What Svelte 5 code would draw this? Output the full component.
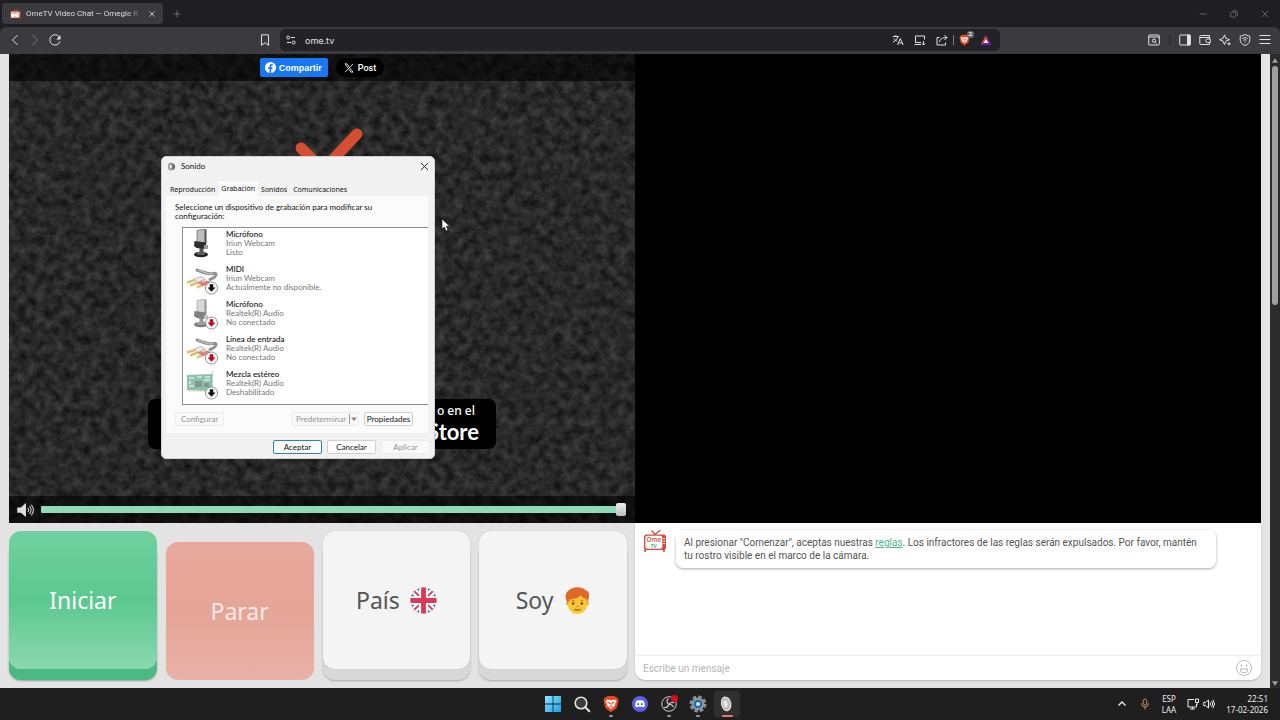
<script lang="ts">
    type Kind = 'mic' | 'cable' | 'board';

    interface Device {
        name: string;
        source: string;
        status: string;
        kind: Kind;
        badge?: 'black' | 'red';
    }

    const devices: Device[] = [
        { name: 'Micrófono', source: 'Iriun Webcam', status: 'Listo', kind: 'mic' },
        { name: 'MIDI', source: 'Iriun Webcam', status: 'Actualmente no disponible.', kind: 'cable', badge: 'black' },
        { name: 'Micrófono', source: 'Realtek(R) Audio', status: 'No conectado', kind: 'mic', badge: 'red' },
        { name: 'Línea de entrada', source: 'Realtek(R) Audio', status: 'No conectado', kind: 'cable', badge: 'red' },
        { name: 'Mezcla estéreo', source: 'Realtek(R) Audio', status: 'Deshabilitado', kind: 'board', badge: 'black' }
    ];

    const tabs = ['Reproducción', 'Grabación', 'Sonidos', 'Comunicaciones'];

    let activeTab = $state('Grabación');
    let volume = $state(100);
    let message = $state('');
</script>

{#snippet tvLogo()}
    <svg viewBox="0 0 24 22" fill="none">
        <path d="M9 1l3 3.500 5-4" stroke="#cf5a48" stroke-width="1.500" stroke-linecap="round" />
        <path d="M3 19l-1 2M20 19l1 2" stroke="#cf5a48" stroke-width="2" stroke-linecap="round" />
        <rect x="1" y="4.500" width="22" height="15.500" rx="2.500" fill="#cf4f3c" />
        <rect x="2.300" y="5.800" width="17" height="13" rx="2" fill="#fff" />
        <path d="M20.400 8.500h1.600M20.400 11h1.600M20.400 13.500h1.600" stroke="#fff" stroke-width="1.200" />
        <text x="10.800" y="12" font-size="6.500" fill="#d4604f" text-anchor="middle" font-weight="600">Ome</text>
        <text x="10.800" y="17.800" font-size="5" fill="#4fae86" text-anchor="middle" font-weight="700">TV</text>
    </svg>
{/snippet}

{#snippet deviceIcon(device: Device)}
    <svg class="device-icon" viewBox="0 2 36 34">
        <g opacity={device.badge ? 0.6 : 1}>
            {#if device.kind === 'mic'}
                <ellipse cx="16" cy="27.500" rx="7" ry="2.800" fill="#222" />
                <ellipse cx="16" cy="26.500" rx="4" ry="1.300" fill="#777" />
                <path d="M14.500 20h4v6.500h-4z" fill="#555" />
                <path d="M12 3.500l7.500-1.500 1.500 1v14l-9 1z" fill="#bdbdbd" stroke="#777" stroke-width=".8" />
                <path d="M19.500 2l1.800.8v13.700h-1.800z" fill="#555" />
                <path d="M9.500 14l11.500 1.500v6.500l-9.500-1-2.500-2z" fill="#2d2d2d" />
                <path d="M19 18h4v4h-4z" fill="#9a9a9a" />
            {:else if device.kind === 'cable'}
                <path d="M12 8c7 2.500 12 5 16 3.500s5.500 2.500-3 6" fill="none" stroke="#4c4c4c" stroke-width="3" stroke-linecap="round" />
                <path d="M13 8c7 2.500 11 5 15 3.500" fill="none" stroke="#aaa" />
                <path d="M2 20.500l8-2.500M5 23.500l8-3" stroke="#c8961a" stroke-width="2.500" />
                <path d="M9 17l7-2.500 4 2.500-7 3.500z" fill="#dedede" stroke="#777" stroke-width=".8" />
                <path d="M12 25.500l7-3" stroke="#d0a01f" stroke-width="2.500" />
                <path d="M12 20.500l9-3 5 3-8 4z" fill="#c2342a" />
                <path d="M17 19.500l6-1.500" stroke="#eee" />
            {:else}
                <path d="M2 8l25-1v16l-5 1-20-1z" fill="#3f9a72" />
                <path d="M27.500 4v19" stroke="#aaa" />
                <path d="M4 11h5M12 10h5M20 10h5M4 19h5M19 13h6M5 14v3" stroke="#c5e4cf" stroke-width="1.500" />
                <rect x="10" y="14" width="7" height="6" fill="#315347" />
                <rect x="19" y="16" width="5" height="4" fill="#315347" />
                <path d="M3 24h19" stroke="#c7a24b" stroke-dasharray="2 1" />
            {/if}
        </g>
        {#if device.badge}
            <circle cx="26.500" cy="26" r="6" fill="#fff" stroke="#777" stroke-width=".8" />
            <path d="M24.700 22.200h3.600v3.300h2.200l-4 4.300-4-4.300h2.200z" fill={device.badge === 'red' ? '#c00820' : '#111'} />
        {/if}
    </svg>
{/snippet}

{#snippet braveIcon()}
    <svg viewBox="0 0 16 18">
        <path d="M4.500 1h7l1.500 1.600 1.700.2.800 2.700-1.800 7.500L8 17.300 2.300 13 .5 5.500l.8-2.700 1.700-.2z" fill="#ee4523" />
        <path d="M4 4.500l4 .7 4-.7 1.500 2-1.700 2.700.4 1.300-1.700 1.300L8 14l-2.500-2.200-1.700-1.300.4-1.300L2.500 6.500z" fill="#fff" />
        <path d="M4.300 7l2.500.8-.8 1.400M11.700 7l-2.500.8.8 1.400M8 8v3M6.500 11.500L8 12l1.500-.5" fill="none" stroke="#ee4523" />
    </svg>
{/snippet}

<div class="screen">
    <header class="tab-strip">
        <div class="browser-tab">
            <span class="favicon">{@render tvLogo()}</span>
            <span class="tab-title">OmeTV Video Chat — Omegle R</span>
            <button class="plain" aria-label="Cerrar pestaña">
                <svg class="i8" viewBox="0 0 8 8"><path d="M1.500 1.500l5 5M6.500 1.500l-5 5" /></svg>
            </button>
        </div>
        <button class="plain dim new-tab" aria-label="Nueva pestaña">
            <svg class="i8" viewBox="0 0 8 8"><path d="M4 .5v7M.5 4h7" /></svg>
        </button>
        <div class="window-controls dim">
            <button class="plain" aria-label="Minimizar"><svg class="i8" viewBox="0 0 8 8"><path d="M.5 4h7" /></svg></button>
            <button class="plain" aria-label="Restaurar">
                <svg class="i8" viewBox="0 0 8 8"><rect x=".7" y="2.200" width="5" height="5" rx="1" /><path d="M2.500.8h3.500a1.500 1.500 0 0 1 1.500 1.500v3.500" /></svg>
            </button>
            <button class="plain" aria-label="Cerrar"><svg class="i8" viewBox="0 0 8 8"><path d="M.8.8l6.400 6.400M7.200.8L.8 7.200" /></svg></button>
        </div>
    </header>

    <nav class="toolbar">
        <div class="nav-buttons">
            <button class="plain" aria-label="Atrás"><svg class="i12" viewBox="0 0 12 12"><path d="M8.500 1L3.500 6l5 5" /></svg></button>
            <button class="plain dim" aria-label="Adelante"><svg class="i12" viewBox="0 0 12 12"><path d="M3.500 1l5 5-5 5" /></svg></button>
            <button class="plain" aria-label="Recargar">
                <svg class="i12" viewBox="0 0 12 12"><path d="M10.500 3.200A5.200 5.200 0 1 0 11 7.500" /><path d="M11.500 1v4.500H7.300z" fill="currentColor" stroke="none" /></svg>
            </button>
        </div>
        <div class="address-group">
            <button class="plain" aria-label="Marcador"><svg class="i12" viewBox="0 0 12 12"><path d="M2.500.8h7v10.500L6 8.700l-3.500 2.600z" /></svg></button>
            <div class="address">
                <svg class="i12" viewBox="0 0 12 12"><circle cx="3.200" cy="3.500" r="1.500" /><path d="M6 3.500h4M2 8.500h4" /><circle cx="8.700" cy="8.500" r="1.500" /></svg>
                <input class="url" aria-label="Dirección" value="ome.tv" />
                <div class="address-icons">
                    <svg class="i12" viewBox="0 0 12 12"><path d="M.8 2.500h6M3.800 1v1.500M6 2.500C5.500 5 3.500 7 1 8M2 4.500c1 1.500 2 2.300 3.200 2.800M5.500 11L8.300 4.500 11.200 11M6.500 9h3.700" /></svg>
                    <svg class="i12" viewBox="0 0 12 12"><path d="M10.500 5.500V2H1.500v6.500h5.500M.5 10.500H7M9.500 7v4M8 9.500l1.500 1.500L11 9.500" /></svg>
                    <svg class="i12" viewBox="0 0 12 12"><path d="M3.500 3.500H1v7.500h8.500V8.500M3.500 8c.3-3 2.500-4.500 7.500-4.500M8.500 1L11 3.500 8.500 6" /></svg>
                    <span class="divider light"></span>
                    <span class="shield">{@render braveIcon()}<b>2</b></span>
                    <svg class="i12 triangle" viewBox="0 0 12 12"><path d="M6 1L.5 11 6 8z" fill="#f0442c" /><path d="M6 1l5.500 10L6 8z" fill="#8b2a8c" /><path d="M.5 11h11L6 7.500z" fill="#5a2bb2" /><path d="M6 5L3.700 9h4.600z" fill="#fff" /></svg>
                </div>
            </div>
        </div>
        <div class="toolbar-icons">
            <svg class="i12" viewBox="0 0 12 12"><rect x=".7" y="1" width="10.600" height="10" rx="1" /><path d="M1 3h10" /><circle cx="6" cy="6.700" r="1.600" /><path d="M7.200 8l1.300 1.300" /></svg>
            <span class="divider"></span>
            <svg class="i12" viewBox="0 0 12 12"><rect x=".7" y="1" width="10.600" height="10" rx="1" /><path d="M8.500 1h2.500v10H8.500z" fill="currentColor" /></svg>
            <svg class="i12" viewBox="0 0 12 12"><path d="M10.500 3.500V1.500h-9A1 1 0 0 0 .8 2.500v7a1 1 0 0 0 1 1h8.700V8.500M1 3.500h9.500v1.500M11.300 5H8.500a1.700 1.700 0 0 0 0 3.500h2.800z" /></svg>
            <svg class="i12" viewBox="0 0 12 12"><path d="M5.500.8l1.400 3.500 3.600 1.400-3.600 1.400-1.400 3.500-1.400-3.500L.5 5.700l3.600-1.400z" /><path d="M10 8.200v3.300M8.300 9.800h3.400" /></svg>
            <svg class="i12" viewBox="0 0 12 12"><path d="M6 .6l4.800 1.700v3.500C10.800 8.500 9 10.500 6 11.500 3 10.500 1.200 8.500 1.200 5.800V2.300z" /><path d="M3.300 4.500c1.500-1 3.900-1 5.400 0M4.300 6.300c1-.7 2.400-.7 3.400 0M5.500 8h1" /></svg>
            <svg class="i12" viewBox="0 0 12 12"><path d="M.5 1.500h11M.5 5.500h11M.5 9.500h11" /></svg>
        </div>
    </nav>

    <main class="viewport">
        <div class="page">
            <section class="video local">
                <svg class="static" aria-hidden="true">
                    <filter id="noise" color-interpolation-filters="sRGB" x="0" y="0" width="100%" height="100%">
                        <feTurbulence type="fractalNoise" baseFrequency="0.11" numOctaves="3" seed="7" />
                        <feColorMatrix values=".25 0 0 0 .035 .25 0 0 0 .035 .25 0 0 0 .035 0 0 0 0 1" />
                    </filter>
                    <rect width="100%" height="100%" filter="url(#noise)" />
                </svg>
                <svg class="antenna" viewBox="0 0 70 50" aria-hidden="true">
                    <path d="M7 24l22 22L63 10" />
                </svg>
                <div class="store-badges" aria-hidden="true">
                    <small>o en el</small>
                    <span>Store</span>
                </div>
                <div class="share-bar">
                    <button class="share facebook">
                        <svg viewBox="0 0 12 12"><circle cx="6" cy="6" r="6" fill="#fff" /><path d="M5 12V7.500H3.500V5.700H5V4.500C5 3 5.900 2.200 7.200 2.200l1.200.1v1.600h-.7c-.7 0-.9.4-.9.900v.9h1.500l-.3 1.800H6.800V12z" fill="#1877f2" /></svg>
                        Compartir
                    </button>
                    <button class="share post">
                        <svg viewBox="0 0 12 12" fill="none" stroke="#fff"><path d="M1.200 1h2.300l7.300 10H8.500zM10.800 1L6.800 5.500M5 7L1.300 11" /></svg>
                        Post
                    </button>
                </div>
                <div class="volume-bar">
                    <svg viewBox="0 0 20 16" aria-hidden="true"><path d="M0 5h4l6-5v16l-6-5H0z" fill="#ddd" /><path d="M12 5.500q2 2.500 0 5M14 3.500q3.500 4.500 0 9M16 2q5 6 0 12" fill="none" stroke="#ccc" stroke-width="1.200" /></svg>
                    <input type="range" min="0" max="100" aria-label="Volumen" bind:value={volume} />
                </div>
            </section>

            <section class="video remote" aria-label="Vídeo remoto"></section>

            <section class="controls">
                <button class="big start">Iniciar</button>
                <button class="big stop">Parar</button>
                <button class="big light">
                    País
                    <svg viewBox="0 0 28 28">
                        <clipPath id="round"><circle cx="14" cy="14" r="13.500" /></clipPath>
                        <g clip-path="url(#round)">
                            <path d="M0 0h28v28H0z" fill="#366ca0" />
                            <path d="M0 0l28 28M28 0L0 28" stroke="#fff" stroke-width="7" />
                            <path d="M0 0l28 28M28 0L0 28" stroke="#dc3858" stroke-width="2" />
                            <path d="M14 0v28M0 14h28" stroke="#fff" stroke-width="9" />
                            <path d="M14 0v28M0 14h28" stroke="#dc3858" stroke-width="5" />
                        </g>
                    </svg>
                </button>
                <button class="big light">
                    Soy
                    <svg viewBox="0 0 28 28">
                        <circle cx="4" cy="17" r="2" fill="#f4ad24" /><circle cx="24" cy="17" r="2" fill="#f4ad24" />
                        <path d="M4 10h20v8c0 5.500-4 10-10 10S4 23.500 4 18z" fill="#fdc835" />
                        <path d="M4 17C0 10 1 5 7 2c5-3 12-2 15 1 5 1 5 7 2 13l-1-4c-3 0-5-2-6-3-3 3-7 3-11 4z" fill="#e0692a" />
                        <circle cx="9.500" cy="17" r="1.300" fill="#653c23" /><circle cx="18.500" cy="17" r="1.300" fill="#653c23" />
                        <path d="M8 14.500q1.500-1 3 0M17 14.500q1.500-1 3 0M13 20h2" stroke="#b86d20" fill="none" />
                        <path d="M10.500 23q3.500 2 7 0" stroke="#9c5320" fill="none" stroke-width="1.200" />
                    </svg>
                </button>
            </section>

            <section class="chat">
                <div class="messages">
                    <span class="avatar">{@render tvLogo()}</span>
                    <p class="bubble">
                        Al presionar "Comenzar", aceptas nuestras <a href="#reglas">reglas</a>. Los infractores de las reglas serán expulsados. Por favor, mantén tu rostro visible en el marco de la cámara.
                    </p>
                </div>
                <div class="compose">
                    <input type="text" aria-label="Mensaje" placeholder="Escribe un mensaje" bind:value={message} />
                    <button class="plain" aria-label="Emojis">
                        <svg viewBox="0 0 18 18" fill="none" stroke="#b9b9b9"><circle cx="9" cy="9" r="7.500" /><path d="M5 10h8q-.5 4-4 4t-4-4z" /><path d="M6.500 5.500v2M11.500 5.500v2" stroke-width="1.500" /></svg>
                    </button>
                </div>
            </section>
        </div>
        <div class="scrollbar" aria-hidden="true">
            <svg viewBox="0 0 8 6"><path d="M4 0l4 6H0z" /></svg>
            <span class="thumb"></span>
            <svg viewBox="0 0 8 6"><path d="M4 6L0 0h8z" /></svg>
        </div>
    </main>

    <footer class="taskbar">
        <div class="apps">
            <button class="app" aria-label="Inicio">
                <svg viewBox="0 0 18 18"><defs><linearGradient id="win" x2="1" y2="1"><stop stop-color="#8be6ff" /><stop offset="1" stop-color="#1aa0ea" /></linearGradient></defs><path d="M1 1h7.600v7.600H1zM9.400 1H17v7.600H9.400zM1 9.400h7.600V17H1zM9.400 9.400H17V17H9.400z" fill="url(#win)" /></svg>
            </button>
            <button class="app" aria-label="Buscar">
                <svg viewBox="0 0 18 18"><circle cx="8" cy="8" r="5.800" fill="#3c3c3c" stroke="#e4e4e4" stroke-width="1.600" /><path d="M12.300 12.300l4 4" stroke="#e4e4e4" stroke-width="2" stroke-linecap="round" /></svg>
            </button>
            <button class="app running" aria-label="Brave">{@render braveIcon()}</button>
            <button class="app" aria-label="Discord">
                <svg viewBox="0 0 18 18"><circle cx="9" cy="9" r="8" fill="#5661e8" /><path d="M5.500 5.800q1.300-.8 2.500-.9l.3.600h1.400l.3-.6q1.200.1 2.500.9 1.600 2.600 1.500 5.400-1.200 1-2.600 1.300l-.6-1q-1.800.5-3.600 0l-.6 1q-1.400-.3-2.600-1.300-.1-2.800 1.500-5.400z" fill="#fff" /><circle cx="7.200" cy="9.200" r="1.100" fill="#5661e8" /><circle cx="10.800" cy="9.200" r="1.100" fill="#5661e8" /></svg>
            </button>
            <button class="app running" aria-label="OBS">
                <svg viewBox="0 0 18 18"><circle cx="9" cy="9" r="7.300" fill="#25252a" stroke="#c9c9c9" /><path d="M8.500 3.500q-3 2.500 0 5.500 3 0 5 3M9 9q-1 4-5 3.500M9 9q3-2.500 5-1" fill="none" stroke="#c9c9c9" stroke-width="1.200" /><circle cx="14.500" cy="3.500" r="3.500" fill="#e00b18" /></svg>
            </button>
            <button class="app running" aria-label="Configuración">
                <svg viewBox="0 0 18 18"><circle cx="9" cy="9" r="7" fill="none" stroke="#85909a" stroke-width="3" stroke-dasharray="3.500 2" /><circle cx="9" cy="9" r="6.500" fill="#8a949d" /><circle cx="9" cy="9" r="4" fill="#1769b2" /><circle cx="9" cy="9" r="2" fill="#d6ecff" /></svg>
            </button>
            <button class="app running active" aria-label="Sonido">
                <svg viewBox="0 0 18 18"><path d="M8 2q6 0 6 7t-5 7z" fill="#555" /><ellipse cx="8" cy="8.800" rx="4.500" ry="7" fill="#bbb" stroke="#eee" transform="rotate(-12 8 8.800)" /><ellipse cx="7.500" cy="8.800" rx="2" ry="3.500" fill="#e8e8e8" transform="rotate(-12 7.500 8.800)" /></svg>
            </button>
        </div>
        <div class="tray">
            <svg class="i12" viewBox="0 0 12 12"><path d="M2.500 7.500L6 4l3.500 3.500" stroke-width="1.300" /></svg>
            <svg class="i12 recording" viewBox="0 0 12 12"><rect x="4.300" y="1" width="3.400" height="6" rx="1.700" /><path d="M2.500 5v.5a3.500 3.500 0 0 0 7 0V5M6 9v2.500" /></svg>
            <span class="lang">ESP<br />LAA</span>
            <span class="tray-pair">
                <svg class="i12" viewBox="0 0 12 12"><path d="M7 1.500H1V9h8.500V6M3 11h5M5.500 9v2M8.500 1h3v3.500h-3zM10 4.500V7" /></svg>
                <svg class="i12" viewBox="0 0 12 12"><path d="M.7 4.300h2L5.500 2v8L2.700 7.700h-2zM7 4.500q1.200 1.500 0 3M8.500 3q2.500 3 0 6M10 1.800q3 4.200 0 8.400" /></svg>
            </span>
            <time>22:51<br />17-02-2026</time>
        </div>
    </footer>

    <div class="dialog" role="dialog" aria-label="Sonido">
        <div class="dialog-title">
            <svg viewBox="0 0 10 10"><path d="M4 1q5 0 5 4T5 9z" fill="#666" /><ellipse cx="4" cy="5" rx="2.500" ry="4" fill="#aaa" stroke="#777" stroke-width=".7" /><ellipse cx="4" cy="5" rx="1" ry="2" fill="#eee" /></svg>
            <span>Sonido</span>
            <button class="plain" aria-label="Cerrar Sonido"><svg class="i8" viewBox="0 0 8 8"><path d="M.8.8l6.400 6.400M7.200.8L.8 7.200" /></svg></button>
        </div>
        <div class="tabs" role="tablist">
            {#each tabs as tab}
                <button role="tab" aria-selected={activeTab === tab} class:active={activeTab === tab} onclick={() => (activeTab = tab)}>{tab}</button>
            {/each}
        </div>
        <div class="panel">
            <p>Seleccione un dispositivo de grabación para modificar su configuración:</p>
            <ul>
                {#each devices as device}
                    <li>
                        {@render deviceIcon(device)}
                        <div>
                            <strong>{device.name}</strong>
                            <span>{device.source}</span>
                            <span>{device.status}</span>
                        </div>
                    </li>
                {/each}
            </ul>
            <div class="panel-actions">
                <button class="push" disabled>Configurar</button>
                <button class="push split" disabled>
                    Predeterminar
                    <svg viewBox="0 0 9 10"><path d="M.5 0v10" stroke="#999" /><path d="M2 3.500h6L5 7z" fill="#888" /></svg>
                </button>
                <button class="push">Propiedades</button>
            </div>
        </div>
        <div class="dialog-actions">
            <button class="push default">Aceptar</button>
            <button class="push">Cancelar</button>
            <button class="push" disabled>Aplicar</button>
        </div>
    </div>

    <svg class="cursor" viewBox="0 0 10 14" aria-hidden="true"><path d="M1 1v10l2.300-2 1.700 4 2-.8L5.400 8.300H8.700z" /></svg>
</div>

<style>
    :global(body) {
        margin: 0;
        background: #1f1f1f;
    }

    .screen {
        position: relative;
        display: flex;
        flex-direction: column;
        height: 100vh;
        overflow: hidden;
        font-family: "Noto Sans", "Open Sans", sans-serif;
    }

    button,
    input {
        font-family: inherit;
    }

    svg {
        display: block;
        flex: none;
    }

    .plain {
        display: flex;
        padding: 0;
        border: 0;
        background: none;
        color: inherit;
    }

    .i8,
    .i12 {
        width: 12px;
        height: 12px;
        fill: none;
        stroke: currentColor;
    }

    .i8 {
        width: 8px;
        height: 8px;
        stroke-width: 0.8;
    }

    .dim {
        color: #77777c;
    }

    /* Browser chrome */
    .tab-strip {
        display: flex;
        align-items: center;
        height: 27px;
        padding: 0 11px 0 2px;
        background: #1f1e23;
        color: #dedee2;
    }

    .browser-tab {
        display: flex;
        align-items: center;
        gap: 5px;
        box-sizing: border-box;
        width: 161px;
        height: 21px;
        padding: 0 7px 0 8px;
        border-radius: 4px;
        background: #3b3a3f;
    }

    .favicon svg {
        width: 11px;
        height: 10px;
    }

    .tab-title {
        flex: 1;
        overflow: hidden;
        font-family: Roboto, sans-serif;
        font-size: 8px;
        white-space: nowrap;
        mask-image: linear-gradient(90deg, #000 85%, transparent);
    }

    .new-tab {
        margin-left: 10px;
    }

    .window-controls {
        display: flex;
        gap: 23px;
        margin-left: auto;
    }

    .toolbar {
        display: flex;
        align-items: center;
        box-sizing: border-box;
        height: 27px;
        padding-bottom: 1px;
        border-radius: 6px 6px 0 0;
        background: #3b3a3f;
        color: #e2e2e5;
    }

    .nav-buttons {
        display: flex;
        gap: 8px;
        box-sizing: border-box;
        width: 20%;
        padding-left: 9px;
    }

    .address-group {
        display: flex;
        flex: 1;
        align-items: center;
        gap: 9px;
        padding-left: 3px;
    }

    .address {
        display: flex;
        flex: 1;
        align-items: center;
        gap: 8px;
        height: 22px;
        padding: 0 8px 0 5px;
        border-radius: 5px;
        background: #232227;
    }

    .url {
        flex: 1;
        min-width: 0;
        padding: 0;
        border: 0;
        outline: 0;
        background: none;
        color: #e2e2e5;
        font-family: Inter, sans-serif;
        font-size: 9px;
    }

    .address-icons {
        display: flex;
        align-items: center;
        gap: 10px;
    }

    .divider {
        width: 1px;
        height: 10px;
        background: #242428;
    }

    .divider.light {
        margin: 0 -5px;
        background: #77777c;
    }

    .shield {
        position: relative;
    }

    .shield svg {
        width: 11px;
        height: 12px;
    }

    .shield b {
        position: absolute;
        top: -3px;
        right: -4px;
        padding: 0 2px;
        border-radius: 3px;
        background: #66666c;
        font-size: 6px;
        line-height: 7px;
    }

    .triangle {
        stroke: none;
    }

    .toolbar-icons {
        display: flex;
        justify-content: flex-end;
        align-items: center;
        gap: 8px;
        box-sizing: border-box;
        width: 280px;
        padding-right: 9px;
    }

    .toolbar-icons .divider {
        margin: 0 1px;
    }

    /* Web page */
    .viewport {
        display: flex;
        flex: 1;
        min-height: 0;
    }

    .page {
        display: grid;
        flex: 1;
        grid-template-columns: 1fr 1fr;
        grid-template-rows: 1fr 165px;
        padding: 0 9px;
        background: #e3e3e3;
    }

    .scrollbar {
        display: flex;
        flex-direction: column;
        align-items: center;
        justify-content: space-between;
        width: 10px;
        padding: 4px 0 2px;
        box-sizing: border-box;
        background: #2b2b2b;
    }

    .scrollbar svg {
        width: 6px;
        height: 5px;
        fill: #9f9f9f;
    }

    .thumb {
        width: 6px;
        height: 38%;
        margin: 3px 0 auto;
        border-radius: 3px;
        background: #9f9f9f;
    }

    .video {
        position: relative;
        overflow: hidden;
        background: #000;
    }

    .local {
        display: flex;
        flex-direction: column;
        justify-content: space-between;
    }

    .static {
        position: absolute;
        inset: 0;
        width: 100%;
        height: 100%;
    }

    .antenna {
        position: absolute;
        top: 70px;
        left: 285px;
        width: 70px;
        height: 50px;
        fill: none;
        stroke: #d44e32;
        stroke-width: 11;
        stroke-linecap: round;
    }

    .store-badges {
        position: absolute;
        top: 345px;
        left: 139px;
        display: flex;
        flex-direction: column;
        align-items: flex-end;
        box-sizing: border-box;
        width: 348px;
        height: 50px;
        padding: 4px 17px 0 0;
        border-radius: 7px;
        background: #000;
        color: #fff;
    }

    .store-badges small {
        padding-right: 4px;
        font-size: 12px;
        font-weight: 500;
        line-height: 16px;
    }

    .store-badges span {
        font-family: Lato, sans-serif;
        font-size: 22px;
        font-weight: 700;
        line-height: 26px;
    }

    .share-bar,
    .volume-bar {
        position: relative;
        display: flex;
        align-items: center;
        height: 27px;
        background: rgba(0, 0, 0, 0.6);
    }

    .share-bar {
        justify-content: center;
        gap: 8px;
    }

    .share {
        display: flex;
        align-items: center;
        gap: 3px;
        height: 19px;
        padding: 0 6px 0 5px;
        border: 0;
        border-radius: 2px;
        color: #fff;
        font-family: "Liberation Sans", Arial, sans-serif;
        font-size: 9px;
        font-weight: 700;
    }

    .share svg {
        width: 11px;
        height: 11px;
    }

    .facebook {
        background: #1877f2;
    }

    .post {
        gap: 4px;
        padding: 0 8px;
        border-radius: 10px;
        background: #000;
        font-family: Roboto, sans-serif;
        font-weight: 500;
    }

    .post svg {
        width: 10px;
        height: 10px;
    }

    .volume-bar {
        gap: 5px;
        padding: 0 9px 0 7px;
    }

    .volume-bar svg {
        width: 20px;
        height: 14px;
    }

    .volume-bar input {
        flex: 1;
        height: 7px;
        margin: 0;
        border-radius: 1px;
        background: #8ddcb4;
        appearance: none;
    }

    .volume-bar input::-webkit-slider-thumb {
        width: 10px;
        height: 13px;
        border-radius: 2px;
        background: linear-gradient(#efefef, #bdbdbd);
        appearance: none;
    }

    .controls {
        display: grid;
        grid-template-columns: repeat(4, 1fr);
        gap: 9px;
        padding: 8px 8px 8px 0;
    }

    .big {
        display: flex;
        align-items: center;
        justify-content: center;
        gap: 10px;
        margin: 0 0 11px;
        padding: 0;
        border: 0;
        border-radius: 12px;
        color: #fff;
        font-size: 23px;
    }

    .big svg {
        width: 27px;
        height: 27px;
    }

    .start {
        background: linear-gradient(#70d19f, #5cc890 50%, #8bd8af);
        box-shadow: 0 11px 0 #4cb982, 0 12px 2px rgba(0, 0, 0, 0.3);
    }

    .stop {
        margin: 11px 0 0;
        background: linear-gradient(#e8a99d, #e5a597 50%, #e8b1a7);
        color: #faeae7;
    }

    .light.big {
        background: #f4f4f4;
        box-shadow: 0 0 1px #aaa, 0 11px 0 #d8d8d8, 0 12px 2px rgba(0, 0, 0, 0.25);
        color: #555;
    }

    .chat {
        display: flex;
        flex-direction: column;
        margin-bottom: 8px;
        border-radius: 0 0 10px 10px;
        background: #fff;
        box-shadow: 0 1px 2px rgba(0, 0, 0, 0.2);
    }

    .messages {
        display: flex;
        flex: 1;
        align-items: flex-start;
        gap: 9px;
        padding: 7px 45px 0 8px;
    }

    .avatar svg {
        width: 24px;
        height: 22px;
    }

    .bubble {
        position: relative;
        flex: 1;
        margin: 0;
        padding: 6px 8px;
        border-radius: 7px;
        background: #fff;
        box-shadow: 0 1px 3px rgba(0, 0, 0, 0.35);
        color: #555;
        font-family: Roboto, sans-serif;
        font-size: 10px;
        line-height: 13px;
    }

    .bubble::before {
        position: absolute;
        top: 0;
        left: -7px;
        width: 12px;
        height: 12px;
        background: #fff;
        clip-path: polygon(0 0, 100% 0, 100% 100%, 60% 75%);
        content: "";
    }

    .bubble a {
        color: #52b38e;
    }

    .compose {
        display: flex;
        align-items: center;
        height: 24px;
        padding: 0 8px;
        border-top: 1px solid #ececec;
    }

    .compose input {
        flex: 1;
        padding: 0;
        border: 0;
        outline: 0;
        background: none;
        color: #555;
        font-family: Roboto, sans-serif;
        font-size: 10px;
    }

    .compose input::placeholder {
        color: #b5b5b5;
    }

    .compose svg {
        width: 18px;
        height: 18px;
    }

    /* Taskbar */
    .taskbar {
        display: grid;
        grid-template-columns: 1fr auto 1fr;
        height: 32px;
        background: #1f1f1f;
        color: #eee;
    }

    .apps {
        display: flex;
        grid-column: 2;
        align-items: center;
        gap: 3px;
    }

    .app {
        position: relative;
        display: flex;
        align-items: center;
        justify-content: center;
        width: 26px;
        height: 26px;
        padding: 0;
        border: 0;
        border-radius: 3px;
        background: none;
    }

    .app svg {
        width: 18px;
        height: 18px;
    }

    .app.active {
        background: #2f2f2f;
    }

    .app.running::after {
        position: absolute;
        bottom: 0;
        width: 4px;
        height: 2px;
        border-radius: 1px;
        background: #999;
        content: "";
    }

    .app.active::after {
        width: 11px;
        background: #e77b68;
    }

    .tray {
        display: flex;
        align-items: center;
        justify-content: flex-end;
        gap: 11px;
        padding-right: 12px;
        font-size: 8px;
        line-height: 11px;
    }

    .recording {
        color: #c98a62;
    }

    .lang {
        text-align: center;
    }

    .tray-pair {
        display: flex;
        gap: 4px;
    }

    time {
        text-align: right;
    }

    /* Sound settings window */
    .dialog {
        position: absolute;
        top: 156px;
        left: 161px;
        box-sizing: border-box;
        width: 274px;
        padding: 0 4px 4px;
        border: 1px solid #d2d2d2;
        border-radius: 5px;
        background: #f1f1f1;
        color: #111;
        font-family: Lato, sans-serif;
        font-size: 8px;
        line-height: 9px;
    }

    .dialog-title {
        display: flex;
        align-items: center;
        gap: 5px;
        height: 19px;
        padding: 0 1px;
    }

    .dialog-title svg {
        width: 9px;
        height: 9px;
    }

    .dialog-title .plain {
        margin-left: auto;
    }

    .tabs {
        display: flex;
        align-items: flex-end;
        height: 20px;
        padding-left: 1px;
    }

    .tabs button {
        height: 13px;
        padding: 0 3px;
        border: 0;
        background: none;
        color: #111;
        font-family: "Noto Sans", sans-serif;
        font-size: 7px;
        line-height: 13px;
    }

    .tabs .active {
        height: 15px;
        background: #fbfbfb;
    }

    .panel {
        margin-right: 2px;
        padding: 7px 0 7px 9px;
        background: #fbfbfb;
    }

    .panel p {
        width: 212px;
        margin: 0 0 6px;
    }

    .panel ul {
        margin: 0 0 7px 7px;
        padding: 0 0 1px;
        border: 1px solid #8d8d8d;
        border-right: 0;
        background: #fff;
        list-style: none;
    }

    .panel li {
        display: flex;
        gap: 5px;
        height: 35px;
        padding: 1px 0 0 2px;
        box-sizing: border-box;
        color: #777;
    }

    .device-icon {
        width: 36px;
        height: 34px;
    }

    .panel li div {
        display: flex;
        flex-direction: column;
        padding-top: 1px;
    }

    .panel strong {
        color: #111;
        font-weight: 500;
    }

    .panel-actions,
    .dialog-actions {
        display: flex;
        gap: 5px;
    }

    .panel-actions {
        padding-right: 15px;
    }

    .panel-actions .push:first-child {
        margin-right: auto;
    }

    .push {
        width: 49px;
        height: 14px;
        padding: 0;
        border: 1px solid #d0d0d0;
        border-radius: 2px;
        background: #fdfdfd;
        color: #111;
        font-size: 8px;
        line-height: 12px;
    }

    .push:disabled {
        border-color: #ededed;
        background: #f9f9f9;
        color: #929292;
    }

    .push.split {
        display: flex;
        align-items: center;
        justify-content: space-between;
        width: 68px;
        padding: 0 0 0 4px;
    }

    .split svg {
        width: 9px;
        height: 10px;
    }

    .push.default {
        border-color: #2f84ac;
    }

    .dialog-actions {
        justify-content: flex-end;
        padding-top: 7px;
    }

    .cursor {
        position: absolute;
        top: 218px;
        left: 441px;
        width: 10px;
        height: 14px;
        fill: #fff;
        stroke: #222;
        stroke-width: 0.7;
    }
</style>
